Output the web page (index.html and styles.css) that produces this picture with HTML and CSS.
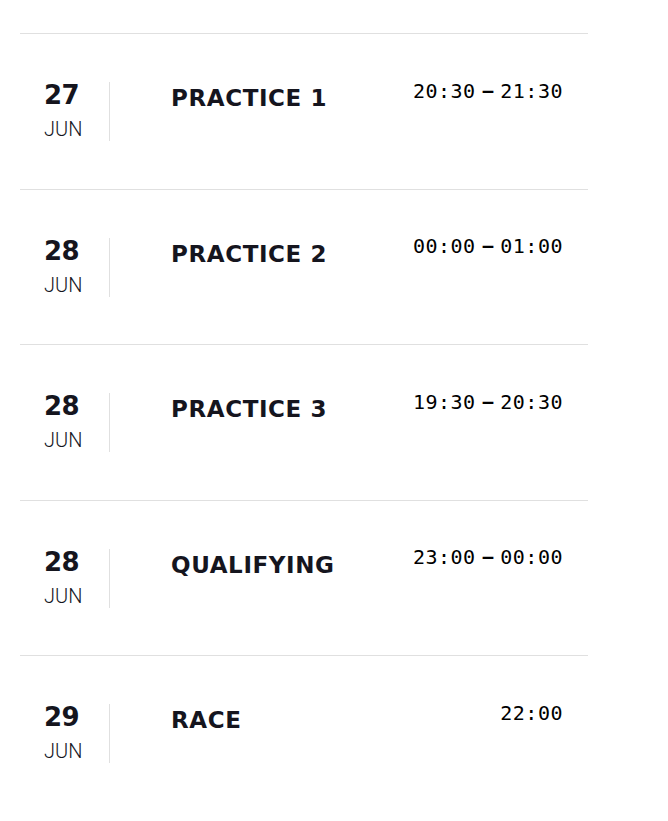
FILE: index.html
```html
<!DOCTYPE html>
<html lang="en">
<head>
<meta charset="utf-8">
<title>Schedule</title>
<link rel="stylesheet" href="styles.css">
</head>
<body>
<div class="schedule">
  <div class="session">
    <div class="date"><span class="day">27</span><span class="month">JUN</span></div>
    <div class="name">PRACTICE 1</div>
    <div class="time">20:30 <span class="sep">−</span> 21:30</div>
  </div>
  <div class="session">
    <div class="date"><span class="day">28</span><span class="month">JUN</span></div>
    <div class="name">PRACTICE 2</div>
    <div class="time">00:00 <span class="sep">−</span> 01:00</div>
  </div>
  <div class="session">
    <div class="date"><span class="day">28</span><span class="month">JUN</span></div>
    <div class="name">PRACTICE 3</div>
    <div class="time">19:30 <span class="sep">−</span> 20:30</div>
  </div>
  <div class="session">
    <div class="date"><span class="day">28</span><span class="month">JUN</span></div>
    <div class="name">QUALIFYING</div>
    <div class="time">23:00 <span class="sep">−</span> 00:00</div>
  </div>
  <div class="session">
    <div class="date"><span class="day">29</span><span class="month">JUN</span></div>
    <div class="name">RACE</div>
    <div class="time">22:00</div>
  </div>
</div>
</body>
</html>
```
FILE: styles.css
```css
html, body {
  margin: 0;
  padding: 0;
  background: #ffffff;
}

body {
  font-family: "DejaVu Sans", sans-serif;
  color: #15151e;
}

.schedule {
  width: 568px;
  margin-left: 20px;
  padding-top: 33px;
}

.session {
  display: flex;
  align-items: flex-start;
  border-top: 1px solid #e0e0e0;
  padding: 48px 25px 47.5px 24px;
}

.date {
  display: flex;
  flex-direction: column;
  width: 65px;
  flex: none;
  border-right: 1px solid #e0e0e0;
  padding-bottom: 2px;
}

.day {
  font-family: "DejaVu Sans", sans-serif;
  font-weight: 700;
  font-size: 26px;
  line-height: 26px;
  letter-spacing: -0.5px;
}

.month {
  font-family: Roboto, sans-serif;
  font-weight: 300;
  font-size: 20px;
  line-height: 20px;
  margin-top: 11px;
}

.name {
  margin-left: 61px;
  margin-top: 5px;
  font-family: "DejaVu Sans", sans-serif;
  font-weight: 700;
  font-size: 23px;
  line-height: 23px;
  letter-spacing: 0.6px;
}

.time {
  margin-left: auto;
  margin-top: -1.5px;
  font-family: "DejaVu Sans Mono", monospace;
  font-size: 20px;
  line-height: 20px;
  letter-spacing: 0.5px;
  word-spacing: -6.5px;
  color: #000000;
  white-space: nowrap;
}

.sep {
  font-weight: 700;
}
```
